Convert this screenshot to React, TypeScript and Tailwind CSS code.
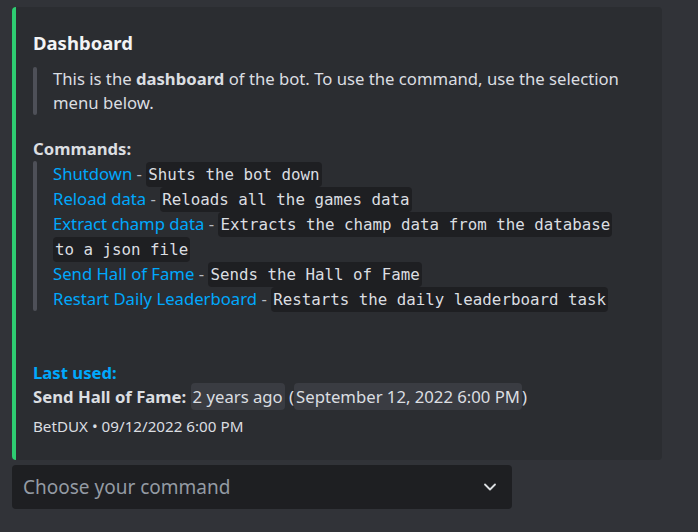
import React from 'react';
import { ChevronDown } from 'lucide-react';

const commands = [
    { name: 'Shutdown', desc: 'Shuts the bot down' },
    { name: 'Reload data', desc: 'Reloads all the games data' },
    { name: 'Extract champ data', desc: 'Extracts the champ data from the database to a json file' },
    { name: 'Send Hall of Fame', desc: 'Sends the Hall of Fame' },
    { name: 'Restart Daily Leaderboard', desc: 'Restarts the daily leaderboard task' },
];

function Code({ children }: { children: React.ReactNode }) {
    return (
        <code className="rounded-[4px] bg-[#1e1f22] px-[2px] py-[3px] font-['DejaVu_Sans_Mono',monospace] text-[15.8px] leading-none text-[#dbdee1] [box-decoration-break:clone]">
            {children}
        </code>
    );
}

export default function App() {
    return (
        <div className="min-h-screen bg-[#313338] pl-[12px] pt-[7px] font-['Noto_Sans',sans-serif] text-[#dbdee1]">
            {/* Embed */}
            <div className="flex w-[650px] overflow-hidden rounded-[4px] bg-[#2b2d31]">
                <div className="w-[4px] shrink-0 bg-[#2ecc71]" />
                <div className="flex-1 pb-[24px] pl-[17px] pr-[30px] pt-[25px]">
                    <div className="text-[18.5px] font-bold leading-[22px] text-[#f2f3f5]">Dashboard</div>

                    <div className="mt-[13px] flex gap-[16px]">
                        <div className="w-[4px] shrink-0 rounded-[4px] bg-[#4e5058]" />
                        <p className="text-[16.7px] leading-[24px]">
                            This is the <strong className="font-bold">dashboard</strong> of the bot. To use the command, use the selection menu below.
                        </p>
                    </div>

                    <div className="mt-[22px] text-[16.7px] font-bold leading-[24px]">Commands:</div>
                    <div className="flex gap-[16px]">
                        <div className="w-[4px] shrink-0 rounded-[4px] bg-[#4e5058]" />
                        <div className="text-[16.7px] leading-[25px]">
                            {commands.map((c) => (
                                <div key={c.name}>
                                    <span className="text-[#00a8fc]">{c.name}</span>
                                    <span className="text-[#b5bac1]"> - </span>
                                    <Code>{c.desc}</Code>
                                </div>
                            ))}
                        </div>
                    </div>

                    <div className="mt-[50px] text-[16.7px] font-bold leading-[24px] text-[#00a8fc]">Last used:</div>
                    <div className="text-[16.7px] leading-[24px]">
                        <strong className="font-bold">Send Hall of Fame:</strong>{' '}
                        <span className="rounded-[4px] bg-[#3a3c42] px-[2px] py-[2px]">2 years ago</span>{' '}
                        (<span className="rounded-[4px] bg-[#3a3c42] px-[2px] py-[2px]">September 12, 2022 6:00 PM</span>)
                    </div>

                    <div className="mt-[7px] text-[15.2px] leading-[20px]">BetDUX • 09/12/2022 6:00 PM</div>
                </div>
            </div>

            {/* Select menu */}
            <div className="mt-[5px] flex h-[44px] w-[500px] items-center justify-between rounded-[4px] bg-[#1e1f22] pl-[11px] pr-[12px]">
                <span className="text-[19px] text-[#949ba4]">Choose your command</span>
                <ChevronDown className="h-[20px] w-[20px] text-[#dbdee1]" strokeWidth={2.2} />
            </div>
        </div>
    );
}
